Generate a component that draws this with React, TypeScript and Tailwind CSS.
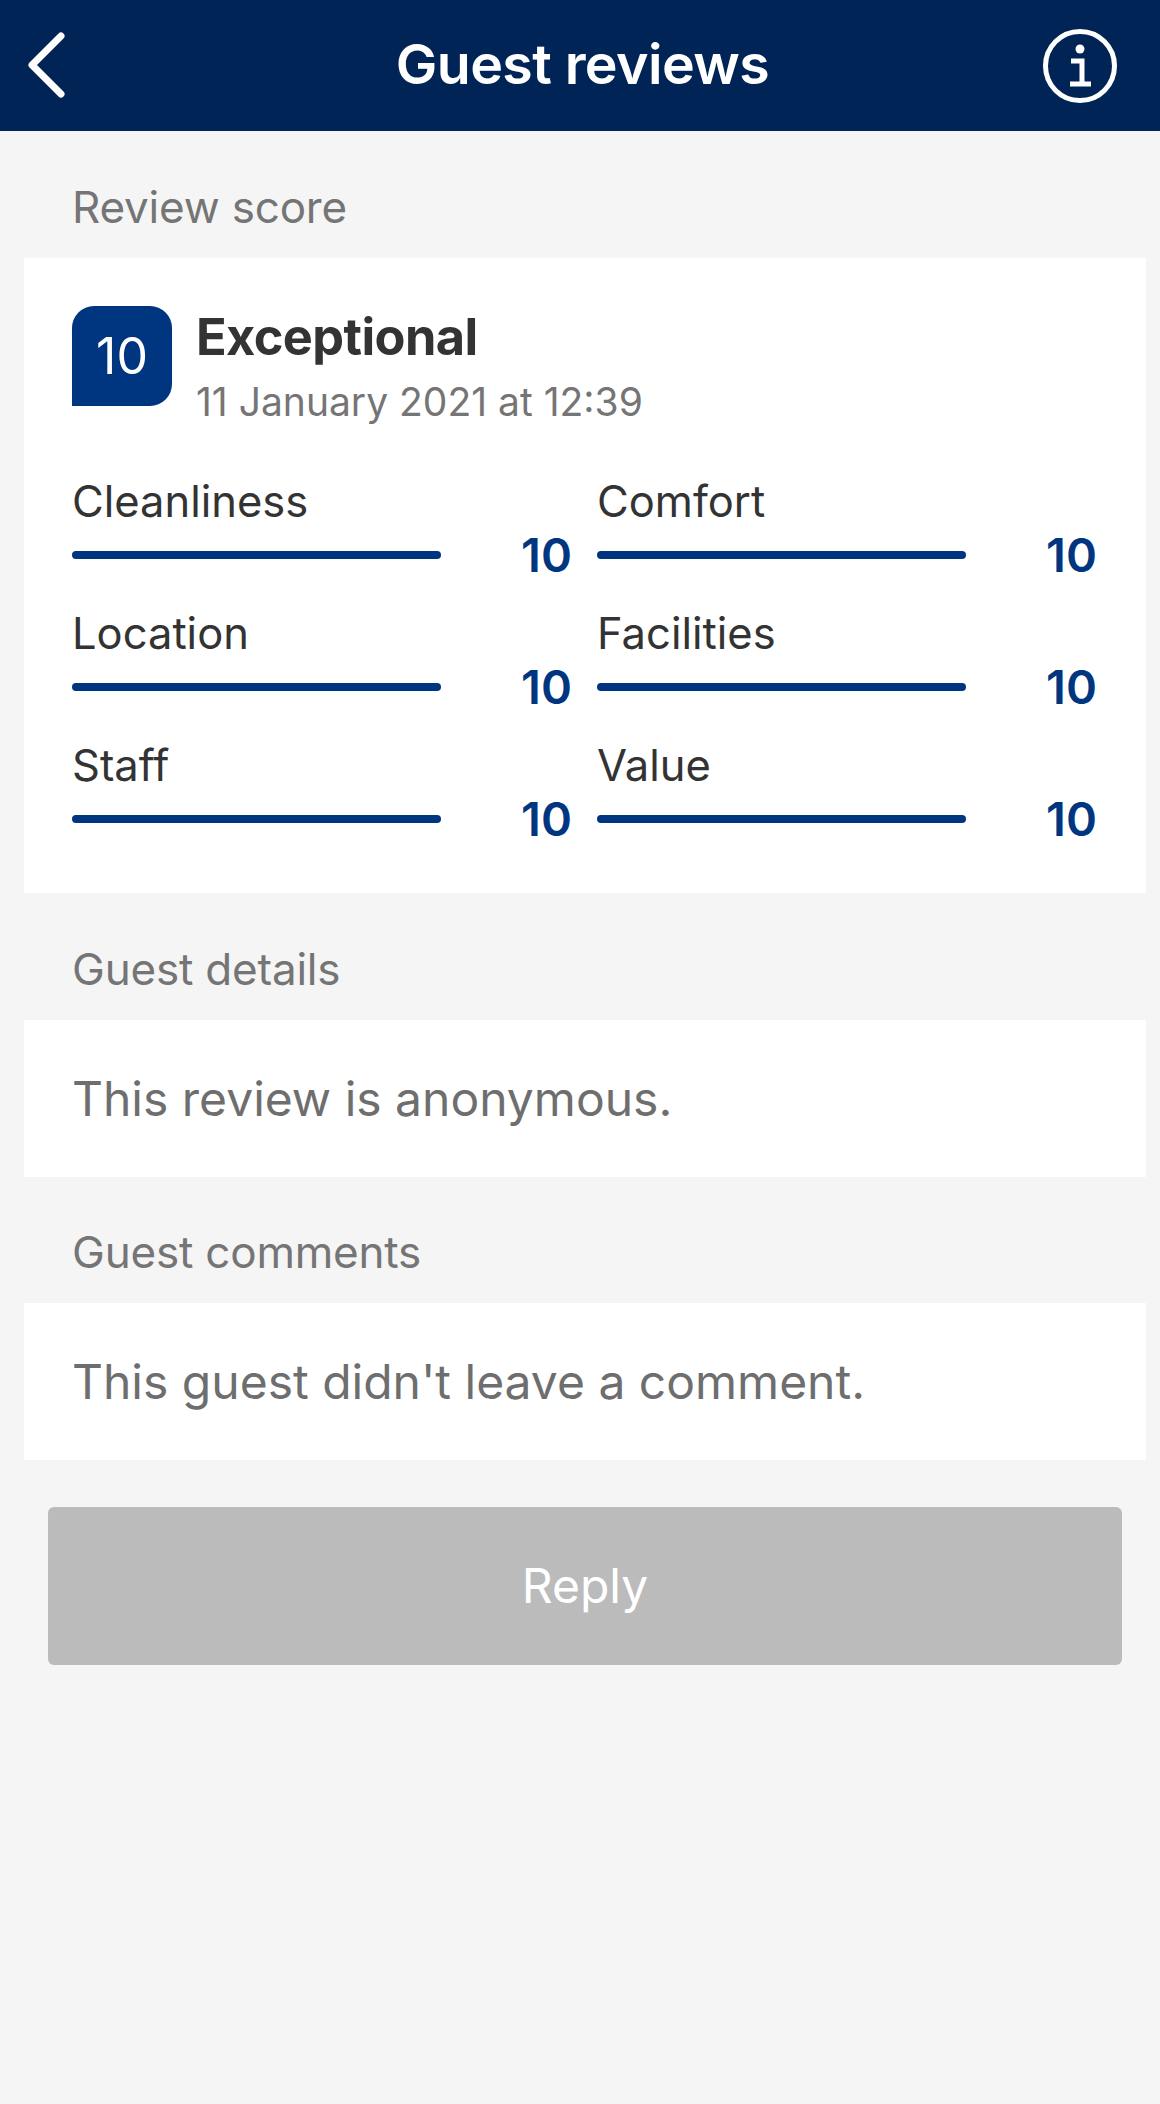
const SCORES = [
  { label: "Cleanliness", value: "10" },
  { label: "Comfort", value: "10" },
  { label: "Location", value: "10" },
  { label: "Facilities", value: "10" },
  { label: "Staff", value: "10" },
  { label: "Value", value: "10" },
];

const SectionLabel = ({ children }: { children: string }) => (
  <div className="flex h-[127px] items-center px-[72px] pt-[25px] text-[44px] leading-none tracking-[-0.2px] text-[#757575]">
    {children}
  </div>
);

const MessageCard = ({ children }: { children: string }) => (
  <div className="mr-[14px] ml-6 flex h-[157px] items-center bg-white px-12 text-[48px] leading-none text-[#6e6e6e]">
    {children}
  </div>
);

export default function App() {
  return (
    <div className="flex min-h-[2104px] w-[1160px] flex-col bg-[#f5f5f5] font-['Inter',sans-serif]">
      <header className="grid h-[131px] grid-cols-[1fr_auto_1fr] items-center bg-[#002455] pr-[43px] pl-[28px]">
        <svg width="37" height="66" viewBox="0 0 37 66" fill="none" className="mb-[1px]">
          <path d="M33 4 L4 33 L33 62" stroke="white" strokeWidth="7" strokeLinecap="round" strokeLinejoin="round" />
        </svg>
        <h1 className="mb-[3px] ml-[20px] text-[55.5px] leading-none font-semibold tracking-[-0.6px] text-white">Guest reviews</h1>
        <svg width="74" height="74" viewBox="0 0 74 74" fill="none" className="justify-self-end">
          <circle cx="37" cy="37" r="34.5" stroke="white" strokeWidth="5" />
          <circle cx="37" cy="20" r="4.5" fill="white" />
          <path d="M28 32 H39 V54 M27 55 H48" stroke="white" strokeWidth="5" />
        </svg>
      </header>

      <SectionLabel>Review score</SectionLabel>
      <div className="mr-[14px] ml-6 h-[635px] bg-white px-12 pt-12">
        <div className="flex">
          <div className="flex h-[100px] w-[100px] items-center justify-center rounded-[22px] rounded-bl-none bg-[#003580] text-[50px] leading-none text-white">
            10
          </div>
          <div className="ml-6">
            <div className="mt-[2px] text-[50.5px] leading-[58px] font-bold tracking-[-0.6px] text-[#333333]">Exceptional</div>
            <div className="mt-[13px] text-[39px] leading-[46px] text-[#757575]">11 January 2021 at 12:39</div>
          </div>
        </div>
        <div className="mt-[51px] grid grid-cols-[525px_1fr]">
          {SCORES.map((score) => (
            <div key={score.label} className="h-[132px]">
              <div className="text-[43.5px] leading-[50px] text-[#333333]">{score.label}</div>
              <div className="mt-[5px] flex w-[500px] items-center">
                <div className="h-2 w-[369px] rounded-full bg-[#003580]" />
                <div className="ml-auto text-[47px] leading-none font-semibold text-[#003580]">{score.value}</div>
              </div>
            </div>
          ))}
        </div>
      </div>

      <SectionLabel>Guest details</SectionLabel>
      <MessageCard>This review is anonymous.</MessageCard>

      <div className="-mt-[1px]">
        <SectionLabel>Guest comments</SectionLabel>
      </div>
      <MessageCard>This guest didn't leave a comment.</MessageCard>

      <button className="mt-[47px] mr-[38px] ml-12 flex h-[158px] items-center justify-center rounded-md bg-[#bbbbbb] text-[48px] leading-none text-white">
        Reply
      </button>
    </div>
  );
}
